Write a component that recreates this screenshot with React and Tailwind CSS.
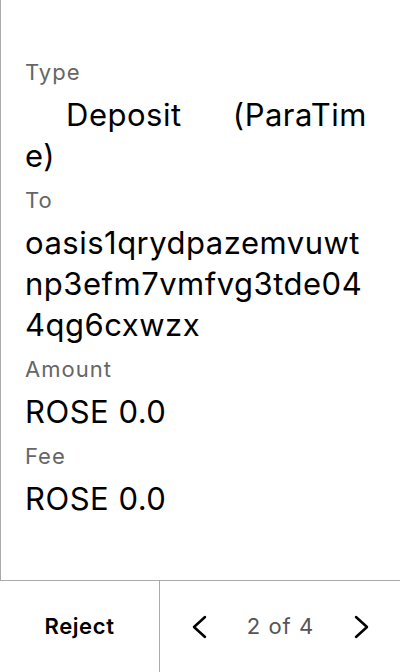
import React from "react";

export default function App() {
  const rows = [
    { label: "Type", value: "    Deposit     (ParaTime)" },
    { label: "To", value: "oasis1qrydpazemvuwtnp3efm7vmfvg3tde044qg6cxwzx" },
    { label: "Amount", value: "ROSE 0.0" },
    { label: "Fee", value: "ROSE 0.0" },
  ];
  return (
    <div className="h-[672px] w-[400px] flex flex-col bg-white font-['Inter',sans-serif]">
      <div className="flex-1 border-l border-[#aaa] pl-[24px] pr-[33px] pt-[48px]">
        {rows.map((row) => (
          <div key={row.label} className="mt-[10px]">
            <div className="text-[22px] leading-[28px] tracking-[1px] text-[#666]">{row.label}</div>
            <div className="mt-[8px] text-[31px] leading-[41px] tracking-[0.5px] text-black whitespace-pre-wrap break-all text-justify">
              {row.value}
            </div>
          </div>
        ))}
      </div>
      <div className="h-[92px] flex border-t border-[#aaa]">
        <button className="w-[160px] border-r border-[#aaa] text-[22px] tracking-[0.6px] font-semibold text-black">
          Reject
        </button>
        <div className="flex-1 flex items-center justify-between pl-[26px] pr-[25px]">
          <svg width="28" height="28" viewBox="0 0 28 28" fill="none" stroke="#000" strokeWidth="2.5" strokeLinecap="round" strokeLinejoin="round">
            <path d="M19 4L8 14l11 10" />
          </svg>
          <span className="text-[22px] tracking-[1px] text-[#555]">2 of 4</span>
          <svg width="28" height="28" viewBox="0 0 28 28" fill="none" stroke="#000" strokeWidth="2.5" strokeLinecap="round" strokeLinejoin="round">
            <path d="M9 4l11 10-11 10" />
          </svg>
        </div>
      </div>
    </div>
  );
}
